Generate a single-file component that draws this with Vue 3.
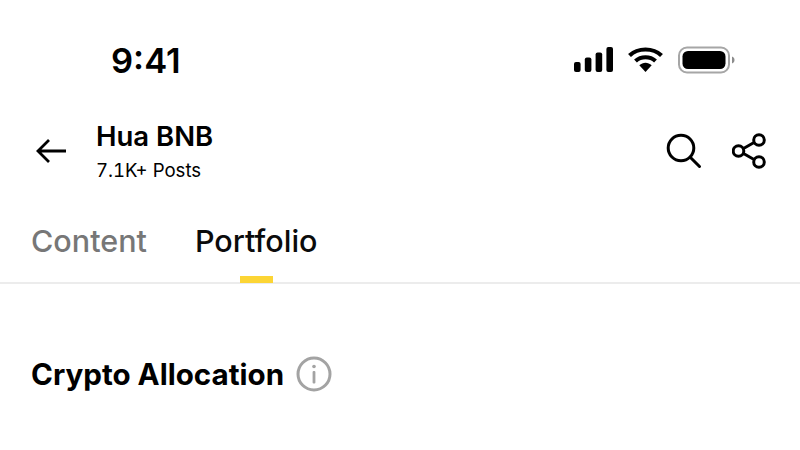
<script setup>
const tabs = [
  { label: 'Content', active: false },
  { label: 'Portfolio', active: true }
];
</script>

<template>
  <div class="page">
    <div class="status-bar">
      <span class="time">9:41</span>
      <div class="status-icons">
        <svg width="39" height="26" viewBox="0 0 39 26">
          <rect x="0" y="15" width="6.6" height="10" rx="2" fill="#000" />
          <rect x="10.8" y="10.5" width="6.6" height="14.5" rx="2" fill="#000" />
          <rect x="21.6" y="5.5" width="6.6" height="19.5" rx="2" fill="#000" />
          <rect x="32.4" y="0" width="6.6" height="25" rx="2" fill="#000" />
        </svg>
        <svg width="35" height="26" viewBox="0 0 35 26">
          <path d="M1.5 8.5 C10 0.5 25 0.5 33.5 8.5" fill="none" stroke="#000" stroke-width="4.2" />
          <path d="M7.5 14 C13 9 22 9 27.5 14" fill="none" stroke="#000" stroke-width="4.2" />
          <path d="M11.3 18.2 C15 14.8 20 14.8 23.7 18.2 L17.5 25 Z" fill="#000" />
        </svg>
        <svg width="57" height="28" viewBox="0 0 57 28">
          <rect x="1" y="1.5" width="50" height="25" rx="8" fill="none" stroke="#a6a6a6" stroke-width="2" />
          <rect x="4.5" y="5" width="43" height="18" rx="5.5" fill="#000" />
          <path d="M54 10.5 C56 11.3 56.5 12.5 56.5 14 C56.5 15.5 56 16.7 54 17.5 Z" fill="#8c8c8c" />
        </svg>
      </div>
    </div>

    <header class="nav">
      <svg class="back" width="32" height="26" viewBox="0 0 32 26">
        <path d="M31 13 H3 M14 2 L3 13 L14 24" fill="none" stroke="#000" stroke-width="2.8" />
      </svg>
      <div class="title-block">
        <div class="name">Hua BNB</div>
        <div class="posts">7.1K+ Posts</div>
      </div>
      <div class="nav-actions">
        <svg width="36" height="36" viewBox="0 0 36 36">
          <circle cx="15" cy="15" r="12.8" fill="none" stroke="#000" stroke-width="3" />
          <path d="M24.5 24.5 L33.5 33.5" fill="none" stroke="#000" stroke-width="3" stroke-linecap="round" />
        </svg>
        <svg width="36" height="36" viewBox="0 0 36 36">
          <circle cx="6.5" cy="18" r="5.3" fill="none" stroke="#000" stroke-width="3" />
          <circle cx="27" cy="7" r="5.3" fill="none" stroke="#000" stroke-width="3" />
          <circle cx="27" cy="29" r="5.3" fill="none" stroke="#000" stroke-width="3" />
          <path d="M11.5 15.5 L22 9.5 M11.5 20.5 L22 26.5" fill="none" stroke="#000" stroke-width="3" />
        </svg>
      </div>
    </header>

    <nav class="tabs">
      <div v-for="tab in tabs" :key="tab.label" class="tab" :class="{ active: tab.active }">
        {{ tab.label }}
        <span v-if="tab.active" class="tab-bar"></span>
      </div>
    </nav>

    <section class="section">
      <h2 class="section-title">Crypto Allocation</h2>
      <svg width="36" height="36" viewBox="0 0 36 36">
        <circle cx="18" cy="18" r="16" fill="none" stroke="#a3a3a3" stroke-width="3" />
        <circle cx="18" cy="10.5" r="1.8" fill="#a3a3a3" />
        <rect x="16.6" y="15" width="2.8" height="12.5" rx="1" fill="#a3a3a3" />
      </svg>
    </section>
  </div>
</template>

<style scoped>
.page {
  width: 800px;
  height: 450px;
  overflow: hidden;
  background-color: #fff;
  color: #000;
  font-family: "Inter", "Liberation Sans", sans-serif;
}

.status-bar {
  height: 120px;
  display: flex;
  align-items: center;
  justify-content: space-between;
  padding: 0 65px 0 111px;
  box-sizing: border-box;
}

.time {
  font-size: 34.6px;
  font-weight: 600;
  line-height: 40px;
}

.status-icons {
  display: flex;
  align-items: center;
  gap: 15px;
}

.nav {
  height: 62px;
  display: flex;
  align-items: center;
  padding: 0 32px 0 35px;
}

.back {
  margin-right: 29px;
}

.title-block {
  flex: 1;
}

.name {
  font-size: 27.5px;
  font-weight: 600;
  line-height: 32px;
}

.posts {
  font-size: 18.6px;
  font-weight: 400;
  line-height: 26px;
  margin-top: 5px;
  font-variant-numeric: tabular-nums;
}

.nav-actions {
  display: flex;
  align-items: center;
  gap: 30px;
}

.tabs {
  height: 102px;
  display: flex;
  gap: 48px;
  padding: 0 31px;
  box-sizing: border-box;
  border-bottom: 2px solid #ececec;
}

.tab {
  position: relative;
  padding-top: 41px;
  font-size: 30.5px;
  font-weight: 500;
  line-height: 36px;
  color: #777;
}

.tab.active {
  color: #0b0b0b;
}

.tab-bar {
  position: absolute;
  left: 45px;
  bottom: -1px;
  width: 33px;
  height: 7px;
  background-color: #fcd535;
}

.section {
  display: flex;
  align-items: center;
  gap: 12px;
  padding: 72px 31px 0;
}

.section-title {
  margin: 0;
  font-size: 29.6px;
  font-weight: 700;
  line-height: 36px;
}
</style>
